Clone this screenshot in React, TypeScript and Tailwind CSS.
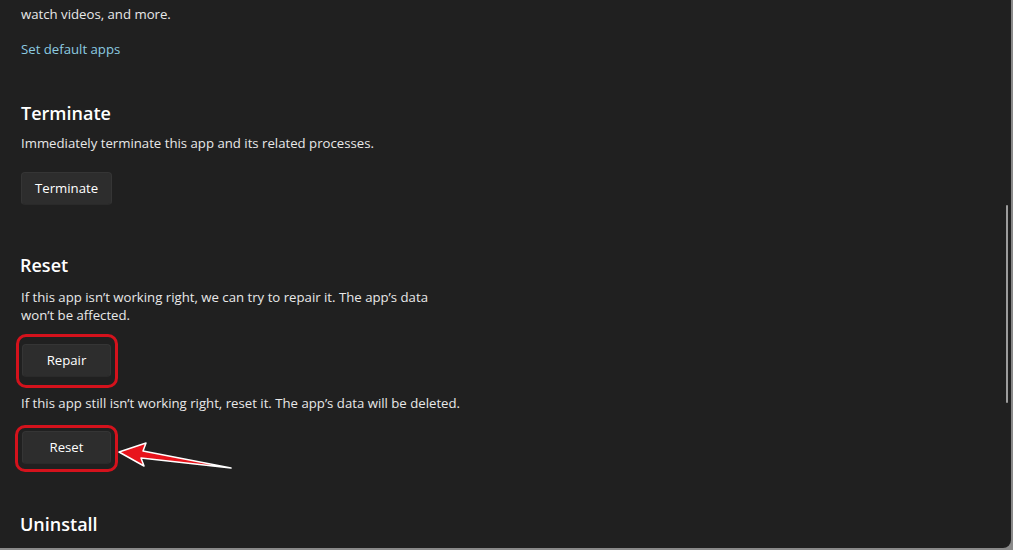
import React from "react";

function Button({ label, ring }: { label: string; ring?: string }) {
  return (
    <div className="relative inline-block">
      <button className="h-[33px] min-w-[89px] px-[13px] rounded-[4px] bg-[#2d2d2d] border border-[#353535] border-b-[#2a2a2a] text-[13.2px] text-white leading-none">
        {label}
      </button>
      {ring && (
        <div
          className={`pointer-events-none absolute rounded-[10px] border-[3px] border-[#d4121c] ${ring}`}
        />
      )}
    </div>
  );
}

export default function App() {
  return (
    <div
      className="w-[1013px] h-[550px] bg-[#8a8a8a] overflow-hidden"
      style={{ fontFamily: '"Open Sans", "Noto Sans", sans-serif' }}
    >
      <div className="relative w-[1011px] h-[548px] bg-[#202020] rounded-br-[8px] overflow-hidden text-white">
        <div className="pl-[21px] pt-[4px] text-[13.2px] leading-[20px]">
          <p className="text-[#e8e8e8]">watch videos, and more.</p>
          <a className="block mt-[15px] text-[#8ccbe0]">Set default apps</a>

          <h2 className="mt-[40px] text-[18px] leading-[28px] font-semibold">Terminate</h2>
          <p className="mt-[6px] text-[#e8e8e8]">
            Immediately terminate this app and its related processes.
          </p>
          <div className="mt-[19px]">
            <Button label="Terminate" />
          </div>

          <h2 className="mt-[46px] text-[18px] leading-[28px] font-semibold -ml-px">Reset</h2>
          <p className="mt-[9px] w-[440px] leading-[18px] text-[#e8e8e8]">
            If this app isn’t working right, we can try to repair it. The app’s data won’t be
            affected.
          </p>
          <div className="mt-[20px] ml-px">
            <Button label="Repair" ring="-left-[6px] -right-[7px] -top-[10px] -bottom-[11px]" />
          </div>
          <p className="mt-[16px] text-[#e8e8e8]">
            If this app still isn’t working right, reset it. The app’s data will be deleted.
          </p>
          <div className="mt-[18px] ml-px">
            <Button label="Reset" ring="-left-[7px] -right-[7px] -top-[6px] -bottom-[8px]" />
          </div>

          <h2 className="mt-[46px] text-[18px] leading-[28px] font-semibold -ml-px">Uninstall</h2>
        </div>

        {/* annotation arrow */}
        <svg className="absolute left-0 top-0 pointer-events-none" width="1011" height="548">
          <polygon
            points="119,452 146,443 143,451 231,468 141,458 144,466"
            fill="#e8141c"
            stroke="#ffffff"
            strokeWidth="1.5"
            strokeLinejoin="round"
          />
        </svg>

        {/* scrollbar */}
        <div className="absolute right-[3px] top-[205px] h-[198px] w-[2px] rounded-full bg-[#9c9c9c]" />
      </div>
    </div>
  );
}
